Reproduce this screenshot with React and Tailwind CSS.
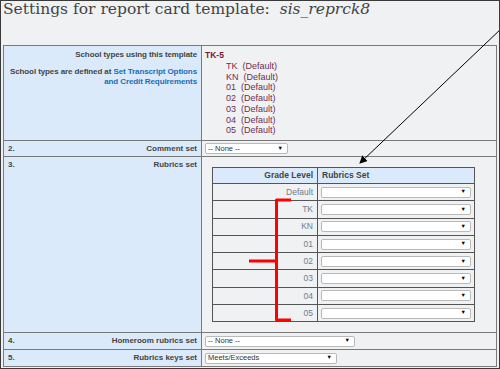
import React from "react";

const GRADES = ["TK", "KN", "01", "02", "03", "04", "05"];

function Select({ label = "", width, className = "" }) {
  return (
    <div
      className={`flex h-[11px] items-center justify-between rounded-[2px] border border-[#b9b9b9] bg-white pl-[2px] pr-[4px] text-[7.5px] leading-none text-[#333] ${className}`}
      style={width ? { width } : undefined}
    >
      <span>{label}</span>
      <span className="text-[5.5px] text-black">▼</span>
    </div>
  );
}

function LabelCell({ num, children, className = "" }) {
  return (
    <td className={`border border-[#7a7a7a] bg-[#dbeafb] align-top px-[4px] ${className}`}>
      <div className="flex justify-between pt-[3px] text-[8px] font-semibold leading-[10px] text-[#444]">
        <span>{num}</span>
        <span className="text-right">{children}</span>
      </div>
    </td>
  );
}

export default function App() {
  return (
    <div
      className="relative h-[369px] w-[500px] overflow-hidden border border-[#3a3a3a] bg-[#f0f1f3]"
      style={{ fontFamily: '"Liberation Sans", Arial, sans-serif' }}
    >
      <div className="h-[44px] pl-[2px]">
        <h1
          className="text-[15.5px] leading-[17px] text-[#444]"
          style={{ fontFamily: '"DejaVu Serif", serif' }}
        >
          Settings for report card template:&nbsp; <i>sis_reprck8</i>
        </h1>
      </div>

      <table className="ml-[2px] w-[494px] table-fixed border-collapse">
        <colgroup>
          <col className="w-[198px]" />
          <col />
        </colgroup>
        <tbody>
          <tr className="h-[95px]">
            <td className="border border-[#7a7a7a] bg-[#dbeafb] pl-[2px] pr-[4px] align-top">
              <div className="whitespace-nowrap pt-[4px] text-right text-[8px] font-semibold leading-[10px] tracking-[-0.1px] text-[#444]">
                <div>School types using this template</div>
                <div className="mt-[7px]">
                  School types are defined at{" "}
                  <span className="text-[#1a6db5]">Set Transcript Options</span>
                  <br />
                  <span className="text-[#1a6db5]">and Credit Requirements</span>
                </div>
              </div>
            </td>
            <td className="border border-[#7a7a7a] px-[3px] align-top">
              <div className="pt-[4px] text-[8.5px] font-bold leading-[10px] text-[#7b1834]">TK-5</div>
              <div className="pl-[21px] pt-[1px] text-[9px] leading-[10.7px] text-[#6e2f52]">
                {GRADES.map((g) => (
                  <div key={g}>
                    {g}&nbsp; (Default)
                  </div>
                ))}
              </div>
            </td>
          </tr>

          <tr className="h-[16px]">
            <LabelCell num="2.">Comment set</LabelCell>
            <td className="border border-[#7a7a7a] px-[3px] align-middle">
              <Select label="-- None --" width={83} />
            </td>
          </tr>

          <tr className="h-[176px]">
            <LabelCell num="3.">Rubrics set</LabelCell>
            <td className="border border-[#7a7a7a] align-top pl-[10px] pt-[10px]">
              <table className="w-[263px] table-fixed border-collapse">
                <colgroup>
                  <col className="w-[105px]" />
                  <col />
                </colgroup>
                <tbody>
                  <tr className="h-[16px] bg-[#dbeafb] text-[8.5px] font-semibold text-[#444]">
                    <td className="border border-[#555] pr-[4px] text-right">Grade Level</td>
                    <td className="border border-[#555] pl-[4px]">Rubrics Set</td>
                  </tr>
                  {["Default", ...GRADES].map((g) => (
                    <tr key={g} className="h-[17.3px]">
                      <td className="border border-[#555] pr-[4px] text-right text-[8.5px] text-[#6f7c8c]">{g}</td>
                      <td className="border border-[#555] pl-[3px] pr-[3px]">
                        <Select />
                      </td>
                    </tr>
                  ))}
                </tbody>
              </table>
            </td>
          </tr>

          <tr className="h-[17px]">
            <LabelCell num="4.">Homeroom rubrics set</LabelCell>
            <td className="border border-[#7a7a7a] px-[3px] align-middle">
              <Select label="-- None --" width={150} />
            </td>
          </tr>

          <tr className="h-[17px]">
            <LabelCell num="5.">Rubrics keys set</LabelCell>
            <td className="border border-[#7a7a7a] px-[3px] align-middle">
              <Select label="Meets/Exceeds" width={132} />
            </td>
          </tr>
        </tbody>
      </table>

      <svg className="pointer-events-none absolute left-0 top-0" width="500" height="369" viewBox="0 0 500 369">
        <defs>
          <marker id="ah" markerWidth="8" markerHeight="8" refX="7" refY="4" orient="auto" markerUnits="userSpaceOnUse">
            <path d="M0,0 L8,4 L0,8 Z" fill="#000" />
          </marker>
        </defs>
        <line x1="502" y1="26" x2="359" y2="162" stroke="#000" strokeWidth="1" markerEnd="url(#ah)" />
        <path
          d="M290 199 L275.5 199 L275.5 319 L290 319 M248 260 L275.5 260"
          fill="none"
          stroke="#ff0000"
          strokeWidth="3"
          strokeLinejoin="round"
        />
      </svg>
    </div>
  );
}
